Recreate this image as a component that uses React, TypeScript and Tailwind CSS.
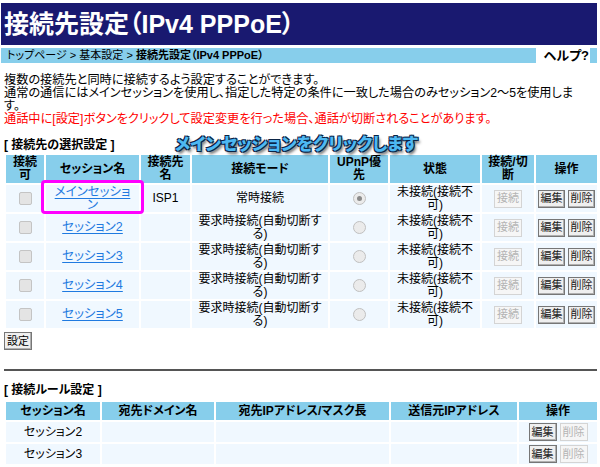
import React from "react";

type Session = {
  id: number;
  name: React.ReactNode;
  isp: string;
  mode: React.ReactNode;
  upnp: boolean;
};

const longMode = (
  <>
    要求時接続(自動切断す
    <br />
    る)
  </>
);

const sessions: Session[] = [
  {
    id: 1,
    name: (
      <>
        メインセッショ
        <br />ン
      </>
    ),
    isp: "ISP1",
    mode: "常時接続",
    upnp: true,
  },
  { id: 2, name: "セッション2", isp: "", mode: longMode, upnp: false },
  { id: 3, name: "セッション3", isp: "", mode: longMode, upnp: false },
  { id: 4, name: "セッション4", isp: "", mode: longMode, upnp: false },
  { id: 5, name: "セッション5", isp: "", mode: longMode, upnp: false },
];

function Btn({ label, disabled }: { label: string; disabled?: boolean }) {
  return (
    <span
      className={
        disabled
          ? "inline-flex items-center justify-center h-[18px] w-[28px] text-[11px] leading-none border border-[#d4d4d4] bg-[#f6f6f6] text-[#b4b4b4]"
          : "inline-flex items-center justify-center h-[18px] w-[28px] text-[11px] leading-none border border-[#767676] bg-[#efefef] text-[#222] shadow-[inset_-1px_-1px_0_#b0b0b0]"
      }
    >
      {label}
    </span>
  );
}

function Check() {
  return (
    <span className="inline-block w-[13px] h-[13px] rounded-[2px] border border-[#c4c4c4] bg-[#e4e4e4] align-middle" />
  );
}

function Radio({ checked }: { checked: boolean }) {
  return (
    <span className="inline-flex items-center justify-center w-[13px] h-[13px] rounded-full border border-[#c0c0c0] bg-[#ebebeb] align-middle">
      {checked && <span className="w-[5px] h-[5px] rounded-full bg-[#8a8a8a]" />}
    </span>
  );
}

const th = "bg-[#87ceeb] font-bold text-center align-middle px-[2px] whitespace-nowrap";
const td = "bg-[#f0f8ff] text-center align-middle px-[2px] whitespace-nowrap";

export default function App() {
  return (
    <div className="min-h-[467px] bg-white text-black pl-[1px] pr-[3px] pt-[3px] font-['Liberation_Sans','Noto_Sans_CJK_JP',sans-serif] [font-feature-settings:'palt']">
      {/* Title */}
      <div className="h-[42px] bg-[#191970] text-white text-[25px] font-bold leading-[42px] pl-[3px] whitespace-nowrap">
        接続先設定（IPv4 PPPoE）
      </div>

      {/* Breadcrumb */}
      <div className="mt-[3px] h-[15px] bg-[#87ceeb] flex text-[11px] leading-[15px]">
        <div className="flex-1 pl-[6px] whitespace-nowrap">
          トップページ &gt; 基本設定 &gt;{" "}
          <span className="font-bold">接続先設定（IPv4 PPPoE）</span>
        </div>
        <div className="w-[54px] bg-white text-right font-bold text-[13px] pr-[1px]">
          ヘルプ?
        </div>
        <div className="w-[7px]" />
      </div>

      <div className="pl-[3px] mr-[-2px]">
        {/* Intro */}
        <div className="mt-[11px] text-[12.2px] leading-[13px] whitespace-nowrap">
          <p>複数の接続先と同時に接続するよう設定することができます。</p>
          <p>
            通常の通信にはメインセッションを使用し、指定した特定の条件に一致した場合のみセッション2～5を使用しま
            <br />
            す。
          </p>
          <p className="text-[#ff0000]">
            通話中に[設定]ボタンをクリックして設定変更を行った場合、通話が切断されることがあります。
          </p>
        </div>

        {/* Session selection */}
        <div className="relative mt-[13px] text-[12px] font-bold leading-[13px]">
          [ 接続先の選択設定 ]
          <span className="absolute left-[171px] top-[-4px] text-[17px] leading-[20px] font-black text-[#4db8f2] whitespace-nowrap [text-shadow:1px_1px_0_#0b2445,-1px_-1px_0_#0b2445,1px_-1px_0_#0b2445,-1px_1px_0_#0b2445,2px_3px_3px_rgba(0,0,0,0.6)]">
            メインセッションをクリックします
          </span>
        </div>

        <table className="mt-[1px] w-full table-fixed border-separate border-spacing-[2px] text-[12px] leading-[13px]">
          <colgroup>
            <col className="w-[38px]" />
            <col className="w-[93px]" />
            <col className="w-[49px]" />
            <col className="w-[136px]" />
            <col className="w-[58px]" />
            <col className="w-[90px]" />
            <col className="w-[52px]" />
            <col />
          </colgroup>
          <thead>
            <tr className="h-[28px]">
              <th className={th}>
                接続
                <br />可
              </th>
              <th className={th}>セッション名</th>
              <th className={th}>
                接続先
                <br />名
              </th>
              <th className={th}>接続モード</th>
              <th className={th}>
                UPnP優
                <br />先
              </th>
              <th className={th}>状態</th>
              <th className={th}>
                接続/切
                <br />断
              </th>
              <th className={th}>操作</th>
            </tr>
          </thead>
          <tbody>
            {sessions.map((s) => (
              <tr key={s.id} className="h-[27px]">
                <td className={td}>
                  <Check />
                </td>
                <td className={`${td} relative`}>
                  <a className="text-[#1f7ae0] text-[12.5px] underline underline-offset-2">{s.name}</a>
                  {s.id === 1 && (
                    <span className="absolute left-[-5px] right-[-5px] top-[-5px] bottom-[-2px] border-[3px] border-[#ff00ff] rounded-[4px]" />
                  )}
                </td>
                <td className={td}>{s.isp}</td>
                <td className={td}>{s.mode}</td>
                <td className={td}>
                  <Radio checked={s.upnp} />
                </td>
                <td className={td}>
                  未接続(接続不
                  <br />
                  可)
                </td>
                <td className={td}>
                  <Btn label="接続" disabled />
                </td>
                <td className={td}>
                  <div className="flex justify-center gap-[3px]">
                    <Btn label="編集" />
                    <Btn label="削除" />
                  </div>
                </td>
              </tr>
            ))}
          </tbody>
        </table>

        <button className="mt-[2px] h-[18px] w-[28px] flex items-center justify-center border border-[#767676] bg-[#efefef] text-[11px] leading-none shadow-[inset_-1px_-1px_0_#b0b0b0]">
          設定
        </button>

        <div className="mt-[19px] mr-[2px] h-[2px] bg-[#555]" />

        {/* Connection rules */}
        <div className="mt-[13px] text-[12px] font-bold leading-[13px]">[ 接続ルール設定 ]</div>

        <table className="mt-[3px] w-full table-fixed border-separate border-spacing-[2px] text-[12px] leading-[13px]">
          <colgroup>
            <col className="w-[94px]" />
            <col className="w-[112px]" />
            <col className="w-[173px]" />
            <col className="w-[126px]" />
            <col />
          </colgroup>
          <thead>
            <tr className="h-[18px]">
              <th className={th}>セッション名</th>
              <th className={th}>宛先ドメイン名</th>
              <th className={th}>宛先IPアドレス/マスク長</th>
              <th className={th}>送信元IPアドレス</th>
              <th className={th}>操作</th>
            </tr>
          </thead>
          <tbody>
            {["セッション2", "セッション3"].map((name) => (
              <tr key={name} className="h-[20px]">
                <td className={td}>{name}</td>
                <td className={td} />
                <td className={td} />
                <td className={td} />
                <td className={td}>
                  <div className="flex justify-center gap-[3px]">
                    <Btn label="編集" />
                    <Btn label="削除" disabled />
                  </div>
                </td>
              </tr>
            ))}
          </tbody>
        </table>
      </div>
    </div>
  );
}
